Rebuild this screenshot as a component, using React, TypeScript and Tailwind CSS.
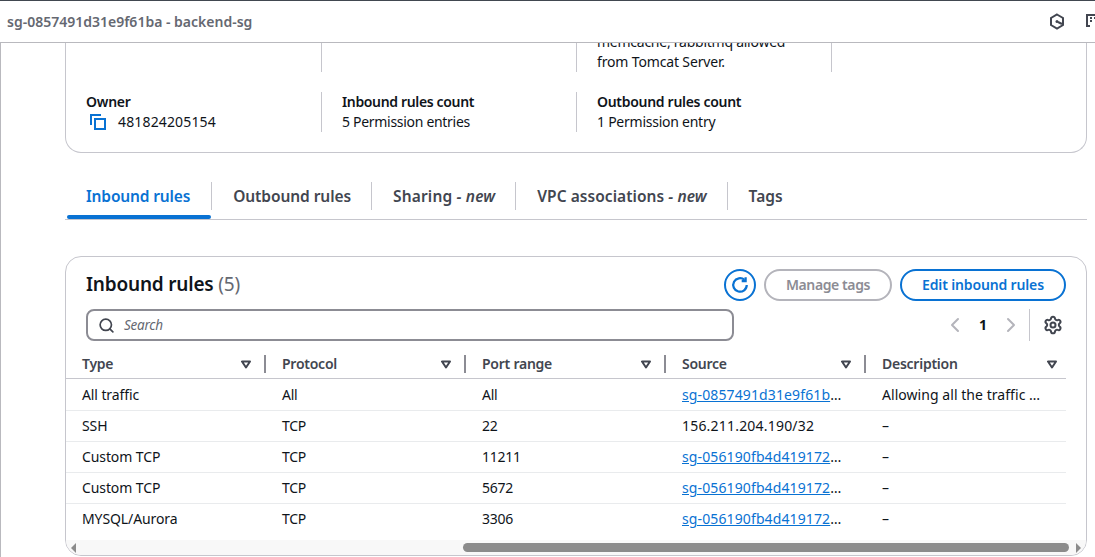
import { ChevronLeft, ChevronRight, Search, Settings } from "lucide-react";

const columns = ["Type", "Protocol", "Port range", "Source", "Description"];

const rows = [
  { type: "All traffic", protocol: "All", port: "All", source: "sg-0857491d31e9f61b", link: true, desc: "Allowing all the traffic …" },
  { type: "SSH", protocol: "TCP", port: "22", source: "156.211.204.190/32", link: false, desc: "–" },
  { type: "Custom TCP", protocol: "TCP", port: "11211", source: "sg-056190fb4d419172", link: true, desc: "–" },
  { type: "Custom TCP", protocol: "TCP", port: "5672", source: "sg-056190fb4d419172", link: true, desc: "–" },
  { type: "MYSQL/Aurora", protocol: "TCP", port: "3306", source: "sg-056190fb4d419172", link: true, desc: "–" },
];

function SortIcon() {
  return (
    <svg width="10" height="9" viewBox="0 0 10 9" fill="none" stroke="#424650" strokeWidth="2">
      <path d="M1 1.500h8L5 7.500z" strokeLinejoin="round" />
    </svg>
  );
}

function CopyIcon() {
  return (
    <svg width="16" height="16" viewBox="0 0 16 16" fill="none" stroke="#0972d3" strokeWidth="2" className="shrink-0">
      <path d="M1 11V1h10" />
      <rect x="5" y="5" width="10" height="10" />
    </svg>
  );
}

function Tab({ label, tag, active, spacing }: { label: string; tag?: string; active?: boolean; spacing?: string }) {
  return (
    <div className="relative flex h-[28px] items-center border-r border-[#c6c6cd] pl-[21px] pr-[20px] first:pl-[19px] first:pr-[21px] last:border-r-0">
      <span className={(active ? "text-[#0972d3] " : "text-[#424650] ") + (spacing ?? "")}>
        {label}
        {tag && <i> - {tag}</i>}
      </span>
      {active && <div className="absolute -bottom-[9px] left-0 right-0 h-[4px] rounded-sm bg-[#0972d3]" />}
    </div>
  );
}

export default function App() {
  return (
    <div className="h-[557px] w-[1095px] overflow-hidden bg-white text-[14px] leading-[20px] tracking-[-0.25px] text-[#0f141a] [font-family:'Noto_Sans',sans-serif]">
      <div className="h-px bg-[#414750]" />
      <header className="flex h-[42px] items-center justify-between border-b border-[#b9b9be] pl-[7px]">
        <span className="text-[14px] font-semibold tracking-normal text-[#656871]">sg-0857491d31e9f61ba - backend-sg</span>
        <div className="flex items-center gap-[21px]">
          <svg width="16" height="17" viewBox="0 0 16 17" fill="none" stroke="#424650" strokeWidth="2">
            <path d="M8 1.500l6 3.500v7l-6 3.500L2 12V5z" />
            <circle cx="8" cy="8.500" r="1.500" fill="#424650" stroke="none" />
            <path d="M9 9l4 2" />
          </svg>
          <svg width="16" height="17" viewBox="0 0 16 17" fill="none" stroke="#424650" strokeWidth="2" className="-mr-[7px]">
            <path d="M4 13H1V2h12v5" />
            <path d="M4 5h2M8 5h2M4 8h2M9 11h6M12 8l3 3-3 3" />
          </svg>
        </div>
      </header>

      <div className="h-[514px] overflow-hidden border-l border-[#b9b9be] pl-[64px] pr-[8px]">
        <section className="-mt-[25px] h-[135px] rounded-b-[16px] border border-t-0 border-[#c6c6cd]">
          <div className="grid h-[54px] grid-cols-[255px_255px_255px_255px]">
            <div />
            <div className="border-l border-[#c6c6cd]" />
            <div className="border-l border-[#c6c6cd] pl-[20px] pt-[14px]">
              <div className="whitespace-nowrap">memcache, rabbitmq allowed</div>
              <div className="tracking-[-0.15px]">from Tomcat Server.</div>
            </div>
            <div className="border-l border-[#c6c6cd]" />
          </div>
          <div className="mt-[20px] grid h-[40px] grid-cols-[255px_255px_255px]">
            <div className="pl-[20px]">
              <div className="font-semibold">Owner</div>
              <div className="flex items-center gap-[12px] pl-[4px]">
                <CopyIcon />
                <span className="tracking-[0.15px]">481824205154</span>
              </div>
            </div>
            <div className="border-l border-[#c6c6cd] pl-[20px]">
              <div className="font-semibold tracking-[-0.35px]">Inbound rules count</div>
              <div className="tracking-[-0.3px]">5 Permission entries</div>
            </div>
            <div className="border-l border-[#c6c6cd] pl-[20px]">
              <div className="font-semibold tracking-[-0.3px]">Outbound rules count</div>
              <div>1 Permission entry</div>
            </div>
          </div>
        </section>

        <nav className="mt-[29px] flex h-[38px] items-start border-b border-[#c6c6cd] pl-[2px] text-[15.500px] font-semibold tracking-normal">
          <Tab label="Inbound rules" active spacing="tracking-[-0.15px]" />
          <Tab label="Outbound rules" spacing="tracking-[-0.07px]" />
          <Tab label="Sharing" tag="new" spacing="tracking-[0.15px]" />
          <Tab label="VPC associations" tag="new" spacing="tracking-[0.05px]" />
          <Tab label="Tags" />
        </nav>

        <section className="mt-[36px] flex h-[300px] flex-col overflow-hidden rounded-[16px] border border-[#c6c6cd]">
          <div className="flex items-start justify-between pl-[20px] pr-[20px] pt-[12px]">
            <h2 className="text-[19px] leading-[30px] font-semibold tracking-[-0.2px]">
              Inbound rules <span className="font-normal text-[#656871]">(5)</span>
            </h2>
            <div className="flex items-center gap-[8px]">
              <div className="flex h-[32px] w-[32px] items-center justify-center rounded-full border-2 border-[#0972d3]">
                <svg width="18" height="18" viewBox="0 0 16 16" fill="none" stroke="#0972d3" strokeWidth="2">
                  <path d="M14 8a6 6 0 1 1-2-4.500" />
                  <path d="M13 1v3.500H9.500" />
                </svg>
              </div>
              <button className="h-[32px] w-[128px] rounded-full border-2 border-[#b4b4bb] font-semibold tracking-[-0.4px] text-[#8c8c94]">Manage tags</button>
              <button className="h-[32px] w-[166px] rounded-full border-2 border-[#0972d3] font-semibold tracking-[-0.15px] text-[#0972d3]">Edit inbound rules</button>
            </div>
          </div>

          <div className="mt-[8px] flex items-center justify-between pl-[20px] pr-[23px]">
            <div className="flex h-[32px] w-[648px] items-center gap-[9px] rounded-[8px] border-2 border-[#8c8c94] pl-[10px]">
              <Search size={17} strokeWidth={2.400} className="text-[#424650]" />
              <span className="text-[13.500px] italic text-[#656871]">Search</span>
            </div>
            <div className="flex items-center">
              <ChevronLeft size={24} strokeWidth={2} className="text-[#b4b4bb]" />
              <span className="w-[32px] text-center font-bold">1</span>
              <ChevronRight size={24} strokeWidth={2} className="text-[#b4b4bb]" />
              <div className="ml-[6px] h-[32px] border-l border-[#c6c6cd]" />
              <Settings size={20} strokeWidth={2.400} className="ml-[13px] text-[#424650]" />
            </div>
          </div>

          <div className="mt-[9px] grid h-[29px] w-[1000px] grid-cols-5 border-b border-[#c6c6cd] font-semibold text-[#424650]">
            {columns.map((col, i) => (
              <div key={col} className="flex h-[28px] items-center pl-[16px]">
                <span className="flex-1">{col}</span>
                <SortIcon />
                <div className={i < 4 ? "ml-[13px] h-[18px] border-l-2 border-[#8c8c94]" : "ml-[9px] h-[18px]"} />
              </div>
            ))}
          </div>

          <div className="pt-px">
            {rows.map((row, i) => (
              <div key={i} className="grid h-[31px] w-[1000px] grid-cols-5 items-center border-b border-[#e9ebed] last:border-b-transparent">
                <div className="pl-[16px] tracking-[-0.1px]">{row.type}</div>
                <div className="pl-[16px]">{row.protocol}</div>
                <div className="pl-[16px]">{row.port}</div>
                <div className="pl-[16px]">
                  {row.link ? (
                    <span className="tracking-[0.12px]">
                      <a className="text-[#0972d3] underline">{row.source}</a>…
                    </span>
                  ) : (
                    <span className="tracking-[0.2px]">{row.source}</span>
                  )}
                </div>
                <div className="pl-[16px] tracking-[0.05px]">{row.desc}</div>
              </div>
            ))}
          </div>

          <div className="mt-auto flex h-[15px] items-center bg-[#f8f8f8] pl-[5px] pr-[5px]">
            <div className="h-0 w-0 border-y-[5px] border-r-[5px] border-y-transparent border-r-[#8b8b8b]" />
            <div className="ml-[387px] h-[9px] flex-1 rounded-full bg-[#8b8b8b]" />
            <div className="ml-[7px] h-0 w-0 border-y-[5px] border-l-[5px] border-y-transparent border-l-[#8b8b8b]" />
          </div>
        </section>
      </div>
    </div>
  );
}
